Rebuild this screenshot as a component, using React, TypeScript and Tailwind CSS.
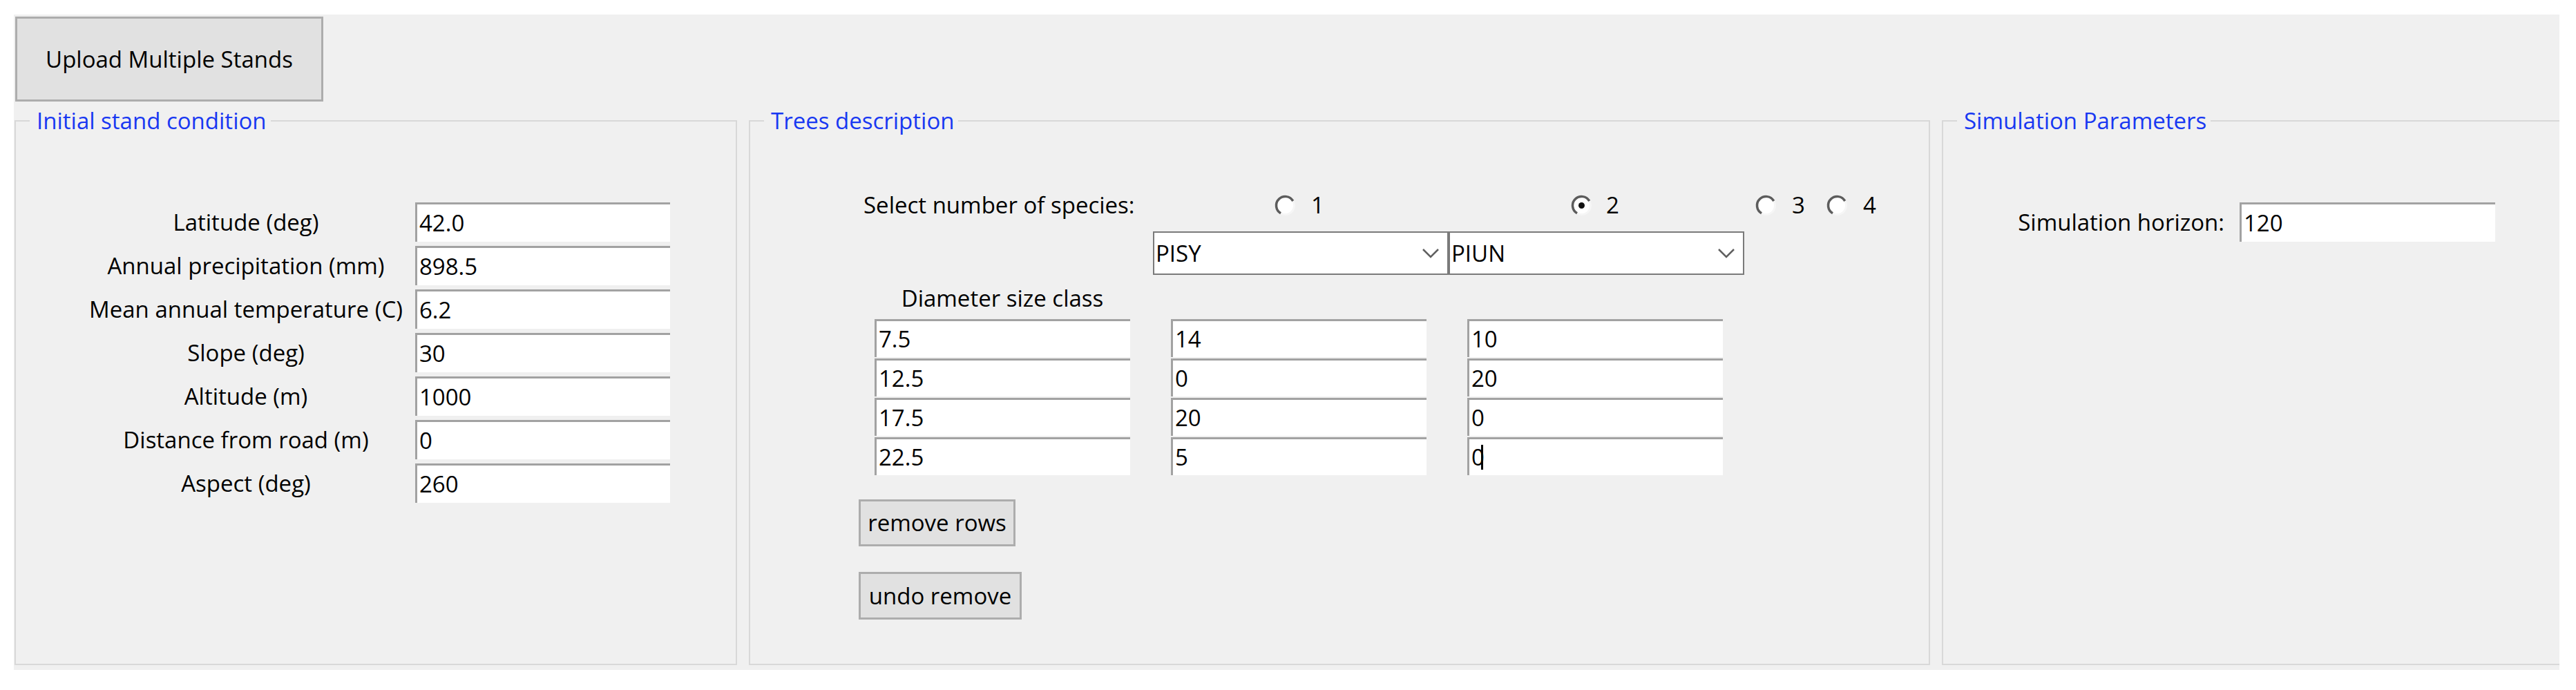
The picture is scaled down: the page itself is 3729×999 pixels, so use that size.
import React from "react";

const font = { fontFamily: '"Open Sans", "Noto Sans", sans-serif' };

const stand = [
  ["Latitude (deg)", "42.0"],
  ["Annual precipitation (mm)", "898.5"],
  ["Mean annual temperature (C)", "6.2"],
  ["Slope (deg)", "30"],
  ["Altitude (m)", "1000"],
  ["Distance from road (m)", "0"],
  ["Aspect (deg)", "260"],
];

const trees = [
  ["7.5", "14", "10"],
  ["12.5", "0", "20"],
  ["17.5", "20", "0"],
  ["22.5", "5", "0"],
];

const textBox =
  "flex items-center bg-white border-t-[3px] border-l-[3px] border-[#a2a2a2] pl-[3px] overflow-hidden whitespace-nowrap";

const winButton =
  "flex items-center justify-center bg-[#e1e1e1] border-[3px] border-[#adadad] text-black";

function Radio({ checked }: { checked?: boolean }) {
  return (
    <svg width="33" height="33" viewBox="0 0 33 33" className="shrink-0">
      <circle cx="16.5" cy="16.5" r="13" fill="#ffffff" stroke="#f6f6f6" strokeWidth="3" />
      <path d="M10 27.76 A13 13 0 1 1 27.76 10" fill="none" stroke="#5c5c5c" strokeWidth="3.5" />
      {checked && <circle cx="16.5" cy="16.5" r="4.5" fill="#111111" />}
    </svg>
  );
}

function Combo({ value }: { value: string }) {
  return (
    <div className="flex h-[63px] w-[428px] items-center justify-between border-2 border-[#7a7a7a] bg-white pl-[2px] pr-[12px]">
      <span>{value}</span>
      <svg width="24" height="14" viewBox="0 0 24 14">
        <polyline points="1,1 12,12 23,1" fill="none" stroke="#606060" strokeWidth="2.5" />
      </svg>
    </div>
  );
}

function Group({ title, width, children }: { title: string; width: string; children: React.ReactNode }) {
  return (
    <fieldset className={`${width} h-[808px] shrink-0 border-2 border-[#d8d8d8]`}>
      <legend className="ml-[20px] pl-[10px] pr-[6px] leading-[40px] text-[#1838f2]">{title}</legend>
      {children}
    </fieldset>
  );
}

export default function App() {
  return (
    <div className="h-[999px] w-[3729px] bg-white pl-[20px] pt-[21px] text-[33px] text-black" style={font}>
      <div className="h-[949px] w-[3685px] overflow-hidden bg-[#f0f0f0]">
        <button className={`${winButton} ml-[2px] mt-[3px] h-[123px] w-[446px]`}>Upload Multiple Stands</button>

        <div className="mt-[8px] ml-[1px] flex gap-x-[17px]">
          <Group title="Initial stand condition" width="w-[1046px]">
            <div className="mt-[98px] ml-[98px] grid grid-cols-[470px_369px] gap-x-[10px] gap-y-[6px]">
              {stand.map(([label, value]) => (
                <React.Fragment key={label}>
                  <div className="flex h-[57px] items-center justify-center whitespace-nowrap">{label}</div>
                  <div className={textBox}>{value}</div>
                </React.Fragment>
              ))}
            </div>
          </Group>

          <Group title="Trees description" width="w-[1710px]">
            <div className="mt-[82px] flex h-[40px] items-center whitespace-nowrap">
              <div className="w-[758px] pl-[164px]">Select number of species:</div>
              <div className="flex w-[429px] items-center gap-x-[21px]">
                <Radio />
                <span>1</span>
              </div>
              <div className="flex w-[267px] items-center gap-x-[19px]">
                <Radio checked />
                <span>2</span>
              </div>
              <div className="flex w-[103px] items-center gap-x-[21px]">
                <Radio />
                <span>3</span>
              </div>
              <div className="flex items-center gap-x-[21px]">
                <Radio />
                <span>4</span>
              </div>
            </div>

            <div className="mt-[18px] ml-[583px] flex">
              <Combo value="PISY" />
              <Combo value="PIUN" />
            </div>

            <div className="mt-[12px] ml-[180px] w-[370px] text-center leading-[44px]">Diameter size class</div>

            <div className="mt-[8px] ml-[180px] grid grid-cols-[370px_370px_370px] gap-x-[59px] gap-y-[2px]">
              {trees.map((row, r) =>
                row.map((cell, c) => (
                  <div key={`${r}-${c}`} className={`${textBox} h-[55px]`}>
                    {cell}
                    {r === 3 && c === 2 && <span className="-ml-[5px] h-[36px] w-[3px] bg-black" />}
                  </div>
                ))
              )}
            </div>

            <button className={`${winButton} mt-[35px] ml-[157px] h-[68px] w-[227px]`}>remove rows</button>
            <button className={`${winButton} mt-[37px] ml-[157px] h-[69px] w-[236px]`}>undo remove</button>
          </Group>

          <Group title="Simulation Parameters" width="w-[900px]">
            <div className="mt-[98px] flex">
              <div className="flex h-[57px] w-[407px] items-center justify-end whitespace-nowrap">Simulation horizon:</div>
              <div className={`${textBox} ml-[22px] h-[57px] w-[370px]`}>120</div>
            </div>
          </Group>
        </div>
      </div>
    </div>
  );
}
